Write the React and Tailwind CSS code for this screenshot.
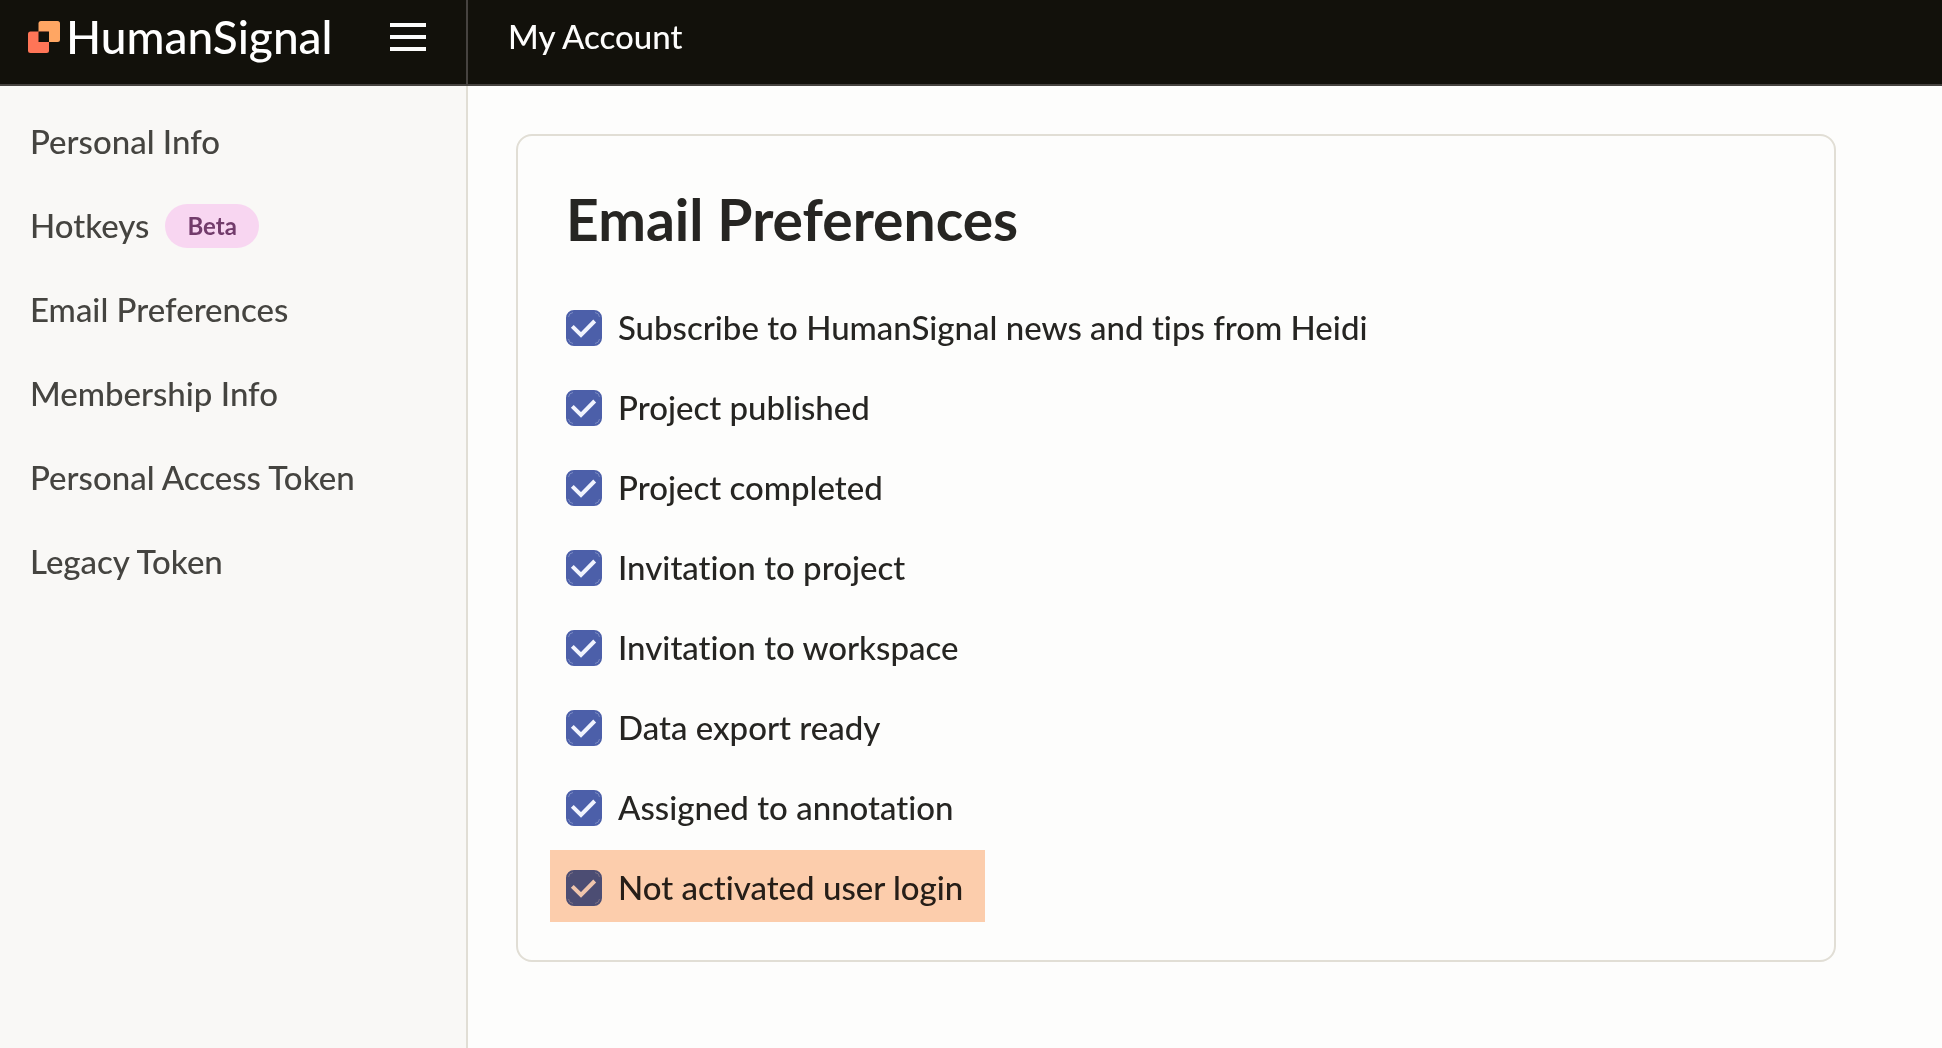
import React, { useState } from 'react';

const navItems = [
  { label: 'Personal Info', href: '#personal-info' },
  { label: 'Hotkeys', href: '#hotkeys', badge: 'Beta' },
  { label: 'Email Preferences', href: '#email-preferences' },
  { label: 'Membership Info', href: '#membership-info' },
  { label: 'Personal Access Token', href: '#personal-access-token' },
  { label: 'Legacy Token', href: '#legacy-token' },
];

const preferences = [
  { id: 'news', label: 'Subscribe to HumanSignal news and tips from Heidi' },
  { id: 'project-published', label: 'Project published' },
  { id: 'project-completed', label: 'Project completed' },
  { id: 'project-invite', label: 'Invitation to project' },
  { id: 'workspace-invite', label: 'Invitation to workspace' },
  { id: 'export-ready', label: 'Data export ready' },
  { id: 'annotation', label: 'Assigned to annotation' },
  { id: 'inactive-login', label: 'Not activated user login', highlighted: true },
];

function Logo() {
  return (
    <a href="#home" className="flex items-center gap-1.5">
      <svg width="32" height="32" viewBox="0 0 32 32" aria-hidden="true">
        <rect x="10.5" y="0" width="21.5" height="21" rx="2.5" fill="#ffa663" />
        <rect x="0" y="10.5" width="21" height="21.5" rx="2.5" fill="#ff7557" />
        <rect x="10.5" y="10.5" width="10.5" height="10.5" fill="#12110b" />
      </svg>
      <span className="text-[46px] leading-none text-white">HumanSignal</span>
    </a>
  );
}

function Preference({ item, checked, onChange }) {
  return (
    <li className="flex h-20 items-center">
      <div className="relative flex items-center gap-4">
        <span className="grid size-9">
          <input
            id={item.id}
            type="checkbox"
            checked={checked}
            onChange={onChange}
            className="peer col-start-1 row-start-1 size-9 appearance-none rounded-lg border-2 border-[#4c5fa9] bg-white checked:bg-[#4c5fa9]"
          />
          <svg
            viewBox="0 0 36 36"
            fill="none"
            aria-hidden="true"
            className="pointer-events-none invisible col-start-1 row-start-1 size-9 peer-checked:visible"
          >
            <path d="M6.3 16.3L15 25L28.7 11" stroke="#f1f3fd" strokeWidth="4" />
            <path
              d="M2.5 7A5 5 0 0 1 7 2.5M29 2.5A5 5 0 0 1 33.5 7M33.5 29A5 5 0 0 1 29 33.5M7 33.5A5 5 0 0 1 2.5 29"
              stroke="#8795c8"
              strokeWidth="0.8"
            />
          </svg>
        </span>
        <label htmlFor={item.id} className="pb-0.5 text-[33px] leading-[38px] text-[#262522]">
          {item.label}
        </label>
        {item.highlighted && (
          <div className="pointer-events-none absolute -top-[18px] -right-[22px] -bottom-[14px] -left-4 bg-[#fecfae] mix-blend-multiply" />
        )}
      </div>
    </li>
  );
}

export default function App() {
  const [disabled, setDisabled] = useState([]);

  const toggle = (id) =>
    setDisabled((prev) => (prev.includes(id) ? prev.filter((x) => x !== id) : [...prev, id]));

  return (
    <div className="flex min-h-screen flex-col bg-[#fdfdfc] font-[Lato,sans-serif] font-medium [font-variant-ligatures:none]">
      <header className="flex h-[86px] border-b-2 border-[#464340] bg-[#12110b]">
        <div className="flex w-[468px] shrink-0 items-center justify-between border-r-2 border-[#464340] pr-10 pb-2.5 pl-7">
          <Logo />
          <button type="button" aria-label="Menu" className="flex flex-col gap-2">
            <span className="h-1 w-9 bg-[#fdfdfc]" />
            <span className="h-1 w-9 bg-[#fdfdfc]" />
            <span className="h-1 w-9 bg-[#fdfdfc]" />
          </button>
        </div>
        <div className="flex items-center pb-3 pl-10">
          <h2 className="text-[33px] leading-[38px] text-[#fdfdfc]">My Account</h2>
        </div>
      </header>

      <div className="flex flex-1">
        <nav className="w-[468px] shrink-0 border-r-2 border-[#e1ded5] bg-[#f9f8f6] pt-3.5">
          <ul>
            {navItems.map((item) => (
              <li key={item.href}>
                <a href={item.href} className="flex h-[84px] items-center gap-4 px-[30px] text-[33px] leading-[38px] text-[#454440]">
                  <span className="pb-0.5">{item.label}</span>
                  {item.badge && (
                    <span className="flex h-11 items-center rounded-full bg-[#f8d6f1] px-[22px] text-2xl font-bold text-[#723c6b]">
                      {item.badge}
                    </span>
                  )}
                </a>
              </li>
            ))}
          </ul>
        </nav>

        <main className="flex-1 p-12">
          <section className="max-w-[1320px] rounded-2xl border-2 border-[#e1ded5] px-12 pt-12 pb-8">
            <h1 className="mb-8 pb-0.5 text-[57px] leading-[70px] font-bold text-[#262522]">Email Preferences</h1>
            <ul>
              {preferences.map((item) => (
                <Preference
                  key={item.id}
                  item={item}
                  checked={!disabled.includes(item.id)}
                  onChange={() => toggle(item.id)}
                />
              ))}
            </ul>
          </section>
        </main>
      </div>
    </div>
  );
}
